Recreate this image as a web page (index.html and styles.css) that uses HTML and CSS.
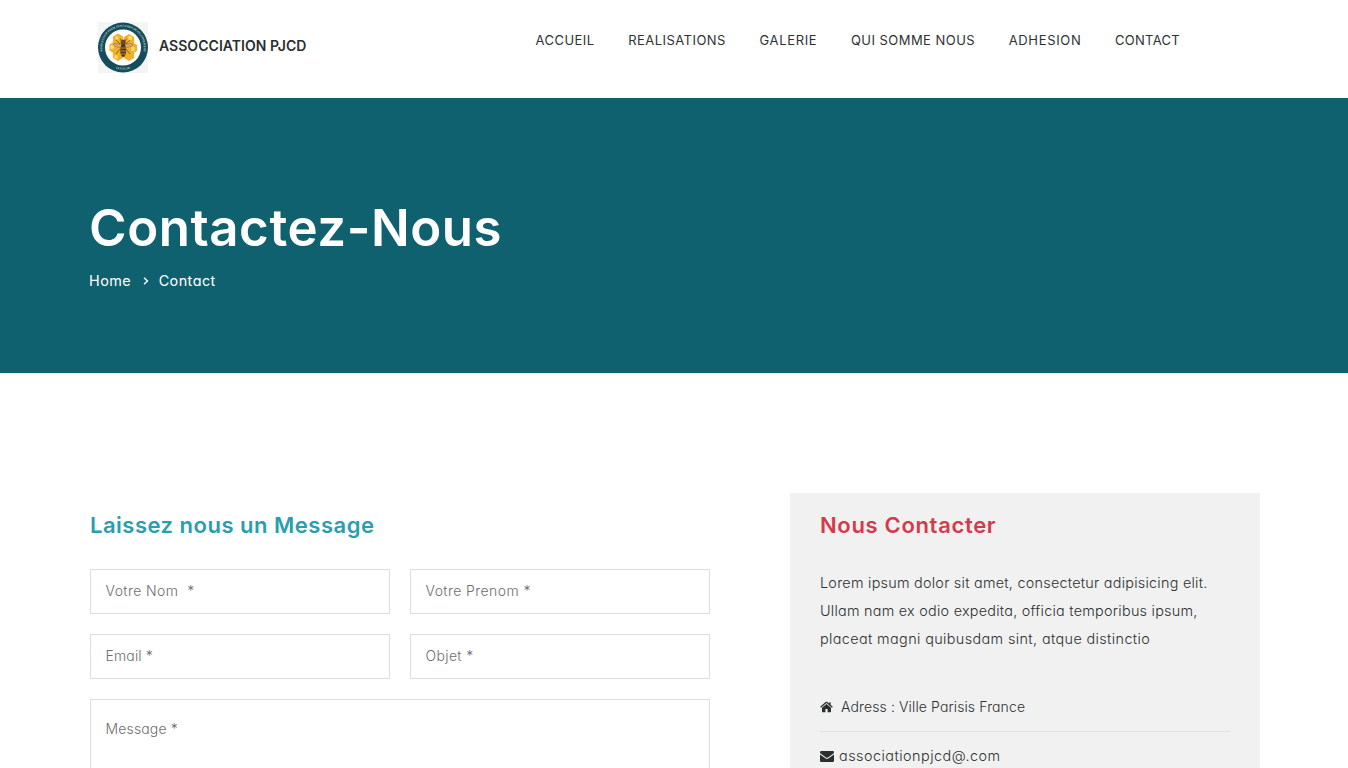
FILE: index.html
```html
<!DOCTYPE html>
<html lang="fr">
<head>
<meta charset="utf-8">
<title>Contact - Association PJCD</title>
<link rel="stylesheet" href="styles.css">
</head>
<body>
<header class="header">
  <a class="brand">
    <svg class="logo" viewBox="0 0 50 51" aria-hidden="true">
      <defs>
        <path id="ring-top" d="M6.500 35A20.800 20.800 0 1 1 43.500 35"/>
        <path id="ring-bottom" d="M12 43.400A22.200 22.200 0 0 0 38 43.400"/>
        <path id="cell" d="M-5 -3 0 -6 5 -3 5 3 0 6-5 3Z" stroke-linejoin="round" stroke-width="2"/>
      </defs>
      <rect width="50" height="51" fill="#f3f4f4"/>
      <circle cx="25" cy="25.500" r="25" fill="#174d5b"/>
      <circle cx="25" cy="25.500" r="18" fill="#fff"/>
      <text class="logo-text"><textPath href="#ring-top" startOffset="50%" text-anchor="middle">ASSOCIATION POUR JAN CZARA DEVELOPPEMENT</textPath></text>
      <text class="logo-text"><textPath href="#ring-bottom" startOffset="50%" text-anchor="middle">(A.P.J.C.D)</textPath></text>
      <g fill="#f0b02b" stroke="#f0b02b">
        <use href="#cell" transform="translate(20 17.500) scale(.85)"/><use href="#cell" transform="translate(31 18) scale(.85)"/>
        <use href="#cell" transform="translate(16.500 25.500) scale(.85)"/><use href="#cell" transform="translate(34 26) scale(.85)"/>
        <use href="#cell" transform="translate(20 33) scale(.85)"/><use href="#cell" transform="translate(31 33) scale(.85)"/>
        <use href="#cell" x="25" y="25"/>
      </g>
      <g fill="#ffe27d" opacity=".8"><circle cx="14" cy="25" r="2.200"/><circle cx="35" cy="27" r="2.200"/><circle cx="18" cy="35" r="2"/><circle cx="32" cy="16" r="2.200"/><circle cx="19" cy="16" r="1.800"/></g>
      <g fill="#d9a86b" stroke="#8a5a25" stroke-width=".4"><ellipse cx="20" cy="23.500" rx="4.600" ry="1.600" transform="rotate(14 20 23.500)"/><ellipse cx="30.500" cy="23.500" rx="4.600" ry="1.600" transform="rotate(-14 30.500 23.500)"/></g>
      <path d="M22 16.500 23.500 19M28.500 16.500 27 19M22 22 18 18M28 22l4-4M22 27l-4 5M28 27l4 5" fill="none" stroke="#6b4a22" stroke-width=".7"/>
      <ellipse cx="25.200" cy="20.500" rx="2.600" ry="3" fill="#6b4a25"/>
      <ellipse cx="25.200" cy="28.500" rx="3" ry="6.500" fill="#4d341c"/>
      <path d="M22.600 26h5.200M22.200 29h6M22.900 32h4.600" stroke="#c9902c" stroke-width="1"/>
    </svg>
    <span class="brand-name">ASSOCCIATION PJCD</span>
  </a>
  <nav class="nav">
    <a class="n1">ACCUEIL</a><a class="n2">REALISATIONS</a><a class="n3">GALERIE</a><a class="n4">QUI SOMME NOUS</a><a class="n5">ADHESION</a><a class="n6">CONTACT</a>
  </nav>
</header>
<section class="hero">
  <h1 class="hero-title">Contactez-Nous</h1>
  <div class="crumbs"><a>Home</a><svg width="6" height="8" viewBox="0 0 6 8" fill="none" stroke="#fff" stroke-width="1.400"><path d="M1 .8 4.500 4 1 7.200"/></svg><a>Contact</a></div>
</section>
<main class="content">
  <form class="form">
    <h2 class="form-title">Laissez nous un Message</h2>
    <div class="fields">
      <input class="field f1" placeholder="Votre Nom &nbsp;*">
      <input class="field f2" placeholder="Votre Prenom *">
      <input class="field f3" placeholder="Email *">
      <input class="field f4" placeholder="Objet *">
      <textarea class="field message" placeholder="Message *"></textarea>
    </div>
  </form>
  <aside class="info">
    <h2 class="info-title">Nous Contacter</h2>
    <p class="info-text"><span class="l1">Lorem ipsum dolor sit amet, consectetur adipisicing elit.</span><span class="l2">Ullam nam ex odio expedita, officia temporibus ipsum,</span><span class="l3">placeat magni quibusdam sint, atque distinctio</span></p>
    <div class="row address">
      <svg width="13" height="12" viewBox="0 0 13 12" fill="#2b2e2f"><path d="M6.500 3 11 6.800V10.600Q11 11.200 10.400 11.200H7.600V8H5.400v3.200H2.600Q2 11.200 2 10.600V6.800Z"/><path d="M.6 6.300 6 1.500Q6.500 1.100 7 1.500l5.400 4.800M10 1.300v3" fill="none" stroke="#2b2e2f" stroke-width="1.300"/></svg>
      <span class="a1">Adress : Ville Parisis France</span>
    </div>
    <div class="row mail">
      <svg width="14" height="11" viewBox="0 0 14 11" fill="#2b2e2f"><path d="M0 1.200Q0 0 1.200 0H12.800Q14 0 14 1.200 14 2.200 12.800 3L8 6.400Q7 7 6 6.400L1.200 3Q0 2.200 0 1.200Z"/><path d="M0 3.600 5.400 7.300Q7 8.300 8.600 7.300L14 3.600V9.800Q14 11 12.800 11H1.200Q0 11 0 9.800Z"/></svg>
      <span class="a2">associationpjcd@.com</span>
    </div>
  </aside>
</main>
</body>
</html>
```
FILE: styles.css
```css
* { box-sizing: border-box; }
body {
  margin: 0;
  background: #fff;
  color: #2f3233;
  font: 300 14.4px/28px Inter, sans-serif;
  font-feature-settings: "cv11";
}
h1, h2, p { margin: 0; }
a, span { white-space: nowrap; }

.header { display: flex; height: 98px; padding: 22px 0 0 98px; align-items: flex-start; }
.brand { display: flex; width: 437.5px; gap: 11px; }
.logo { width: 50px; height: 51px; }
.logo-text { font: 700 2.9px "Liberation Serif", serif; fill: #c6dadb; }
.brand-name { font-size: 14px; font-weight: 600; line-height: 48px; color: #2b2e30; letter-spacing: .04px; }
.nav { display: flex; gap: 33.6px; font-size: 13px; font-weight: 400; line-height: 37px; font-feature-settings: normal; }
.n1, .n2, .n4 { letter-spacing: .46px; }
.n3, .n5 { letter-spacing: .66px; }
.n6 { letter-spacing: .3px; }

.hero { height: 275px; padding: 100px 89px 0; background: #0f616f; color: #fff; }
.hero-title { font-size: 51px; font-weight: 600; line-height: 60px; letter-spacing: .55px; font-feature-settings: normal; }
.crumbs { display: flex; align-items: center; margin-top: 9px; font-size: 14.4px; font-weight: 400; letter-spacing: .45px; }
.crumbs svg { margin: 0 9.500px 0 12px; }

.content { display: flex; gap: 80px; height: 395px; padding: 120px 88px 0 90px; overflow: hidden; }
.form { width: 620px; }
.form-title, .info-title { padding-top: 16px; font-size: 22px; font-weight: 600; line-height: 32px; font-feature-settings: normal; }
.form-title { color: #2a9db0; letter-spacing: .5px; }
.fields { display: grid; grid-template-columns: 300px 300px; gap: 20px; margin-top: 28px; }
.field {
  width: 100%;
  height: 45px;
  padding: 0 14.500px 2px;
  border: 1px solid #dcddde;
  border-radius: 0;
  background: #fff;
  font: 300 14px/28px Inter, sans-serif;
  font-feature-settings: "cv11";
  letter-spacing: .15px;
}
.field::placeholder { color: #6c6e70; opacity: 1; }
.f1, .f2 { letter-spacing: .42px; }
.f4 { letter-spacing: .35px; }
.message { grid-column: 1 / 3; height: 150px; padding: 15px 14.500px; resize: none; }

.info { width: 470px; height: 400px; padding: 0 30px; background: #f1f1f1; }
.info-title { color: #d43a49; letter-spacing: .67px; }
.info-text { margin-top: 28px; }
.info-text span { display: block; }
.info-text span, .row span { width: max-content; }
.l1, .l2 { letter-spacing: .25px; }
.l3 { letter-spacing: .38px; }
.a1 { font-size: 14px; letter-spacing: .12px; }
.a2 { letter-spacing: .48px; }
.row { display: flex; align-items: center; }
.address { height: 79px; padding-top: 30px; border-bottom: 1px solid #e0e1e2; gap: 8px; }
.mail { height: 49px; gap: 5px; }
.mail span { padding-bottom: 1px; }
```
